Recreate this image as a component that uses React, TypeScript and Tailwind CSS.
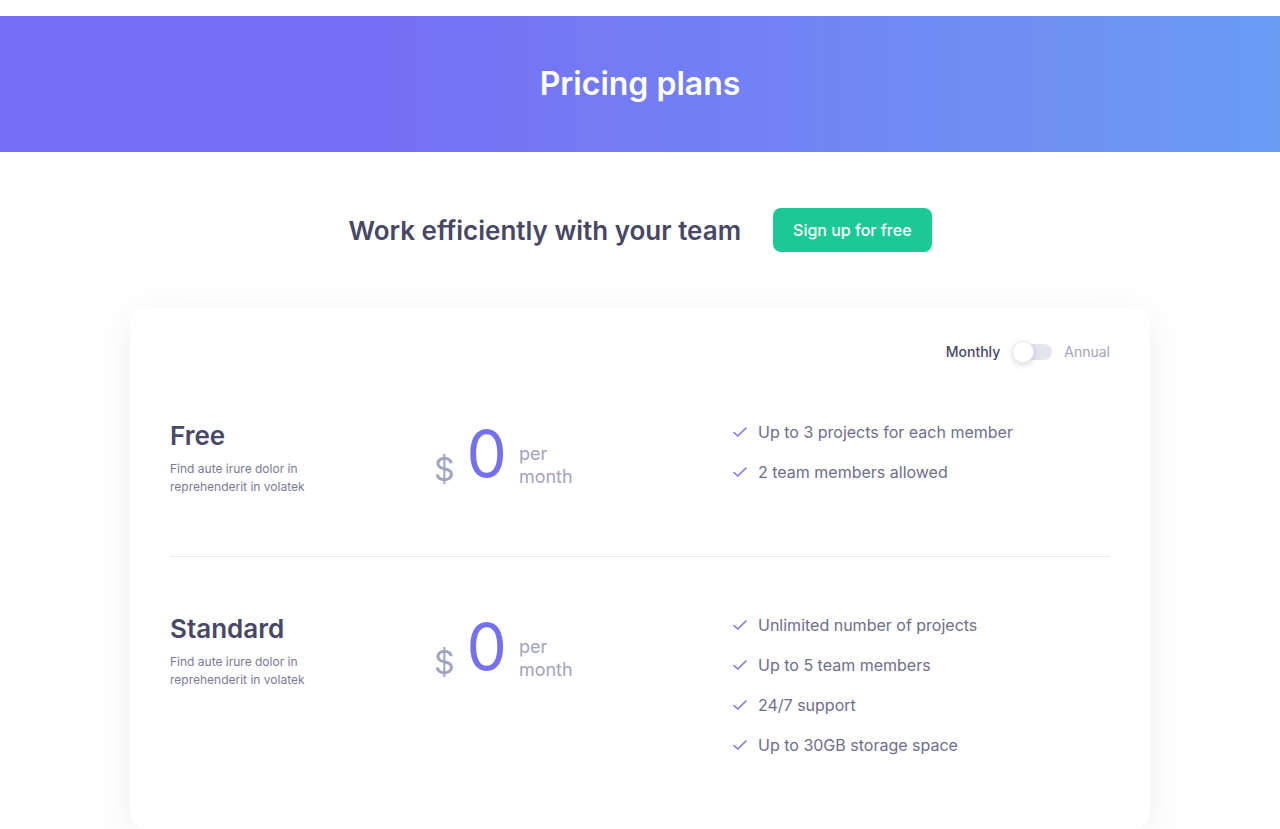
const plans = [
    {
        name: "Free",
        features: ["Up to 3 projects for each member", "2 team members allowed"],
    },
    {
        name: "Standard",
        features: ["Unlimited number of projects", "Up to 5 team members", "24/7 support", "Up to 30GB storage space"],
    },
];

function Check() {
    return (
        <svg width="16" height="16" viewBox="0 0 16 16" fill="none" className="shrink-0">
            <path d="M2 8.5l3.8 3.5L14 4" stroke="#7b73f0" strokeWidth="1.6" strokeLinecap="round" strokeLinejoin="round" />
        </svg>
    );
}

export default function App() {
    return (
        <div className="min-h-screen bg-white pt-4 font-['Inter',sans-serif]">
            <header className="h-[136px] flex items-center justify-center bg-gradient-to-r from-[#766ef4] from-30% to-[#6a9cf2]">
                <h1 className="text-[32px] font-semibold text-white">Pricing plans</h1>
            </header>

            <section className="flex items-center justify-center gap-8 pt-14 pb-14">
                <h2 className="text-[26px] font-semibold text-[#474766]">Work efficiently with your team</h2>
                <button className="h-11 px-5 rounded-lg bg-[#1bc996] text-white text-base font-medium">
                    Sign up for free
                </button>
            </section>

            <div className="mx-auto w-[1020px] bg-white rounded-2xl shadow-[0_8px_40px_rgba(20,20,60,0.07)] px-10 pt-8 pb-4">
                <div className="flex items-center justify-end gap-3 h-6">
                    <span className="text-sm font-medium text-[#474766]">Monthly</span>
                    <div className="relative w-10 h-4 rounded-full bg-[#e4e3f0]">
                        <div className="absolute left-0 -top-[3px] w-[22px] h-[22px] rounded-full bg-white border border-[#ebebf3] shadow-[0_2px_6px_rgba(0,0,0,0.15)]" />
                    </div>
                    <span className="text-sm text-[#a3a3bd]">Annual</span>
                </div>

                {plans.map((plan, i) => (
                    <div key={plan.name} className={"flex pt-14 " + (i === 0 ? "pb-[60px] border-b border-[#e8e8f0]" : "pb-14")}>
                        <div className="w-[264px]">
                            <h3 className="text-[26px] leading-8 font-semibold text-[#474766]">{plan.name}</h3>
                            <p className="mt-2 text-xs leading-[18px] text-[#7a7a96]">
                                Find aute irure dolor in
                                <br />
                                reprehenderit in volatek
                            </p>
                        </div>
                        <div className="w-[298px] flex items-start">
                            <span className="mt-[30px] text-[32px] leading-10 text-[#a3a3bf]">$</span>
                            <span className="ml-3 text-[64px] leading-[68px] text-[#7470f0]">0</span>
                            <span className="ml-3 mt-[22px] text-lg leading-[23px] text-[#a3a3bf]">
                                per
                                <br />
                                month
                            </span>
                        </div>
                        <ul className="flex-1 flex flex-col gap-4">
                            {plan.features.map((f) => (
                                <li key={f} className="flex items-center gap-2.5 text-base leading-6 text-[#6e6e8c]">
                                    <Check />
                                    {f}
                                </li>
                            ))}
                        </ul>
                    </div>
                ))}
            </div>
        </div>
    );
}
